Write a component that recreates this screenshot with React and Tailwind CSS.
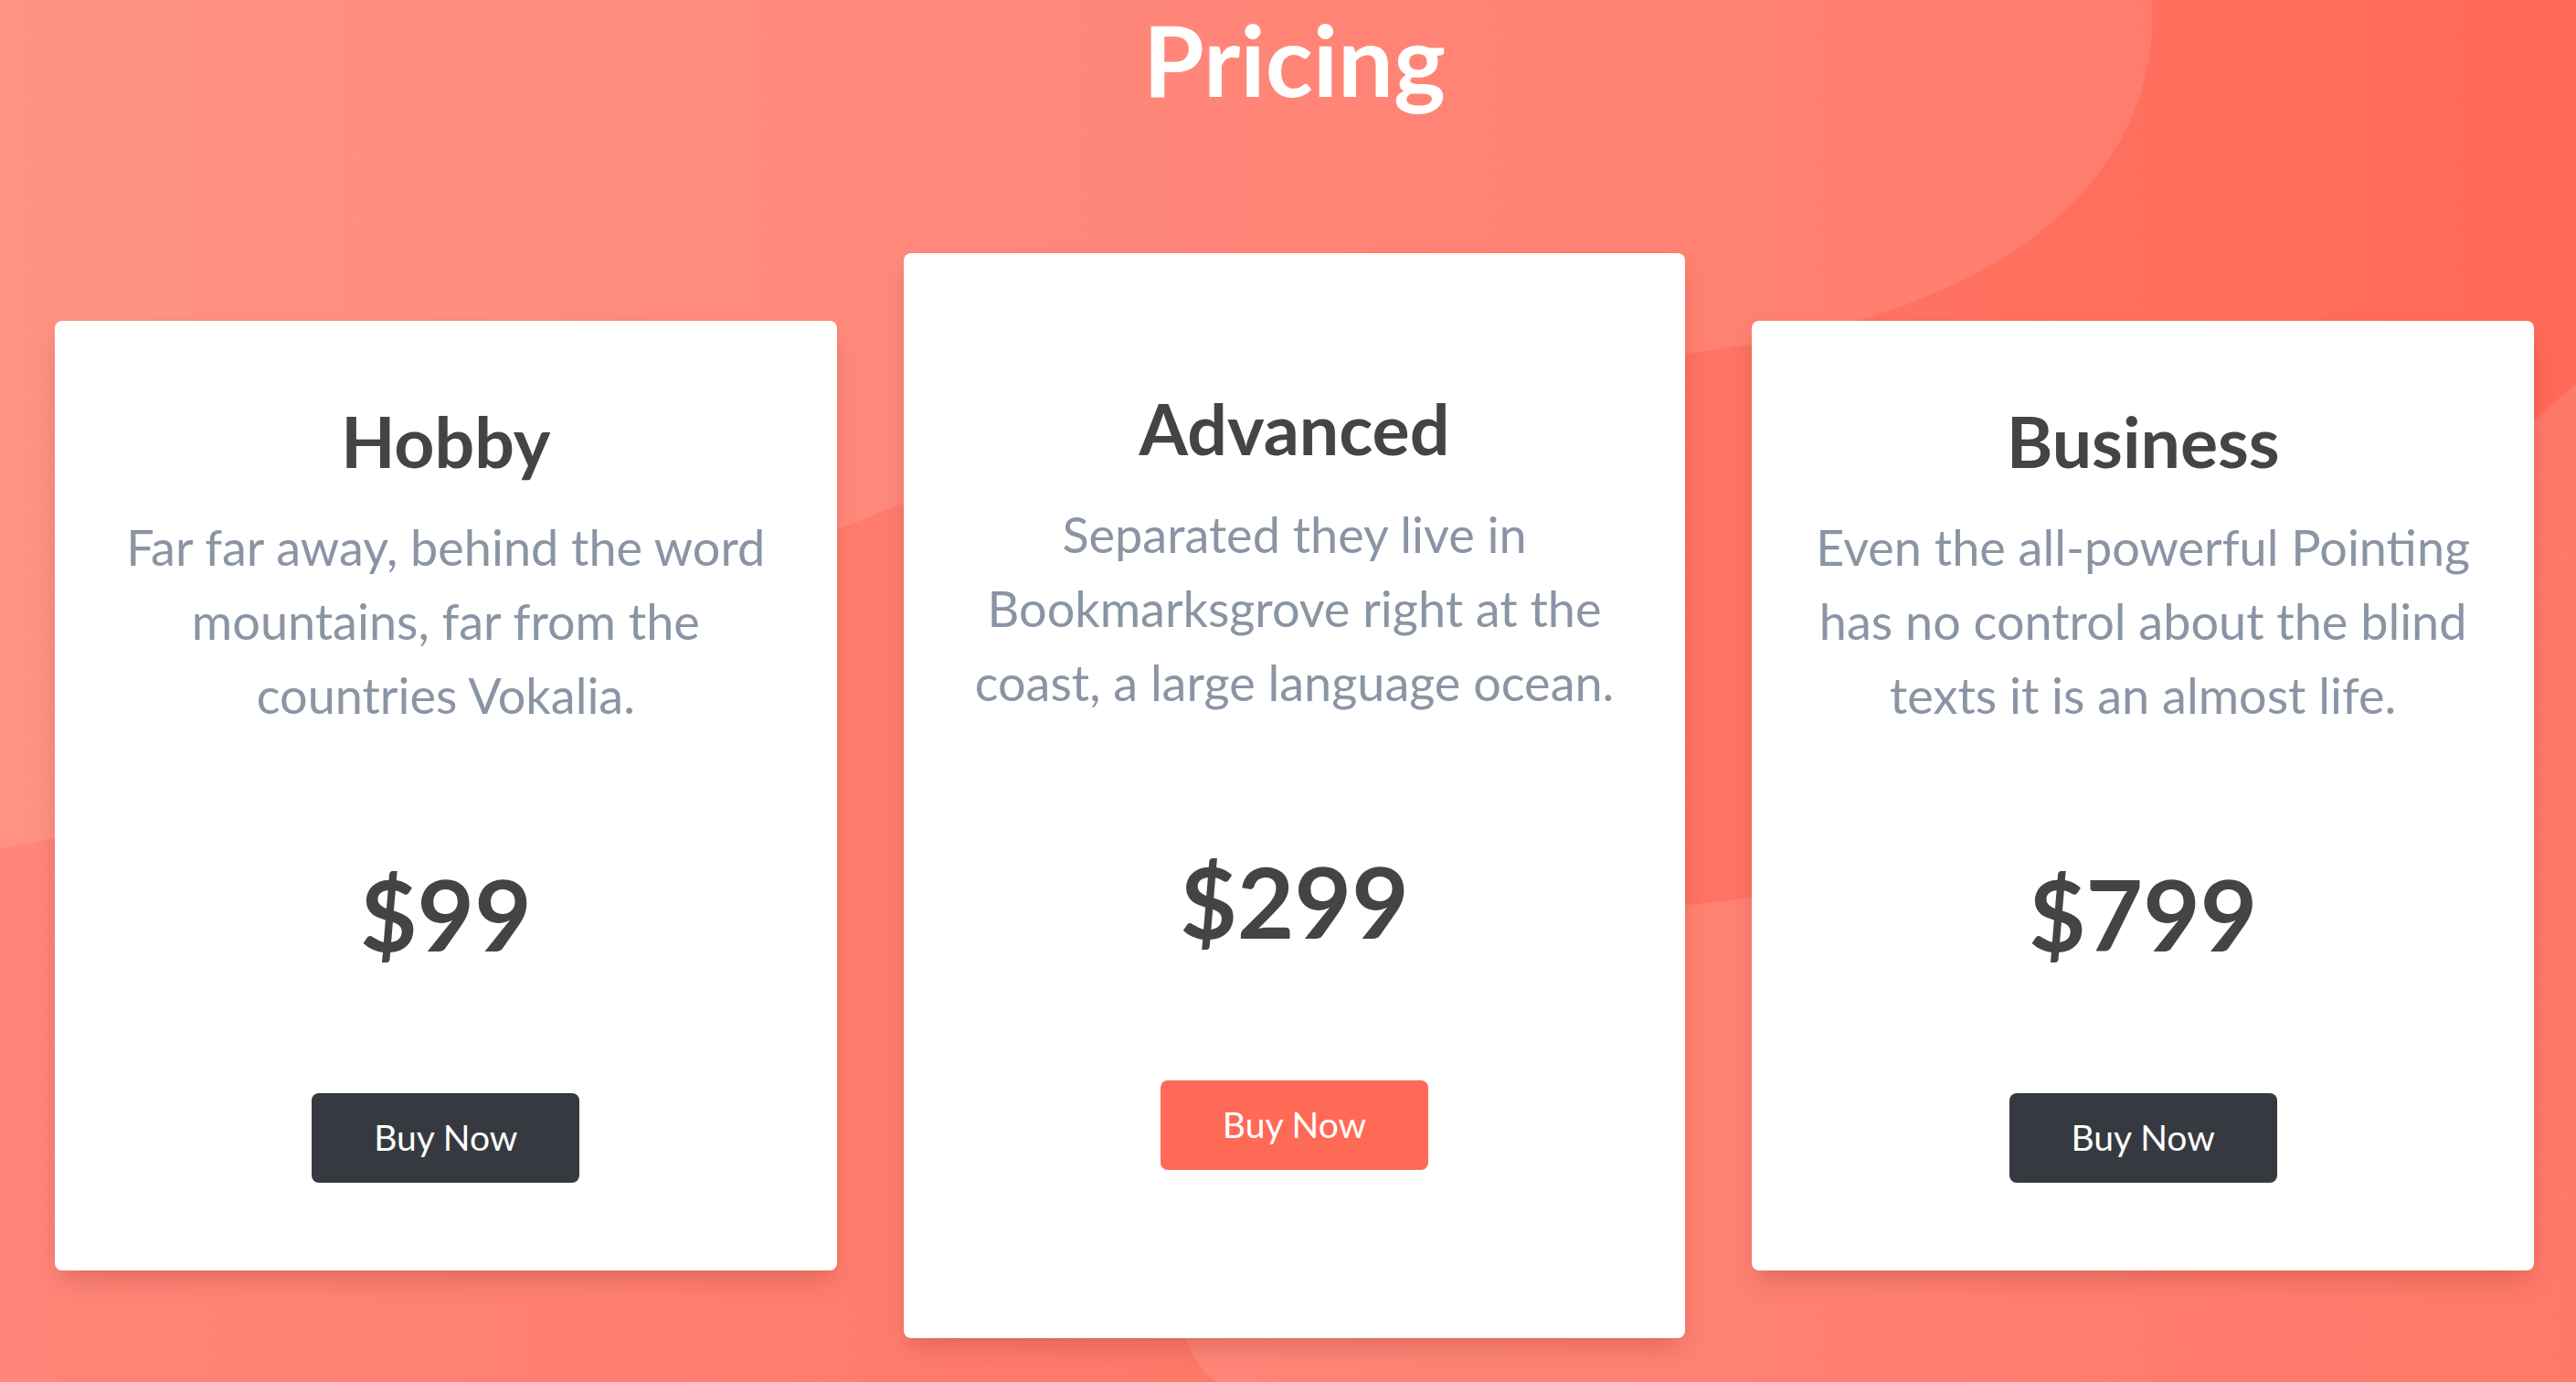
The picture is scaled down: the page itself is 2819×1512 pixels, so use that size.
import React from 'react';

const plans = [
  {
    name: 'Hobby',
    text: 'Far far away, behind the word mountains, far from the countries Vokalia.',
    price: '$99',
    featured: false,
  },
  {
    name: 'Advanced',
    text: 'Separated they live in Bookmarksgrove right at the coast, a large language ocean.',
    price: '$299',
    featured: true,
  },
  {
    name: 'Business',
    text: 'Even the all-powerful Pointing has no control about the blind texts it is an almost life.',
    price: '$799',
    featured: false,
  },
];

const Blobs = () => (
  <svg
    className="absolute inset-0 h-full w-full"
    viewBox="0 0 2819 1512"
    preserveAspectRatio="none"
    aria-hidden="true"
  >
    {/* top wave */}
    <path
      d="M0,0 L2355,0 C2365,170 2230,340 1860,385 C1500,430 1150,480 950,566 C600,700 300,880 0,928 Z"
      fill="#ffffff"
      fillOpacity="0.1"
    />
    {/* lower right wave */}
    <path
      d="M2819,420 C2500,700 2200,960 1850,990 C1500,1020 1280,1250 1290,1430 C1295,1470 1310,1495 1330,1512 L2819,1512 Z"
      fill="#ffffff"
      fillOpacity="0.1"
    />
  </svg>
);

const PlanCard = ({ plan }) => (
  <div
    className={
      plan.featured
        ? 'flex flex-1 flex-col items-center rounded-lg bg-white px-[56px] pt-[145px] pb-[184px] text-center shadow-[0_14px_28px_-6px_rgba(120,30,20,0.25)]'
        : 'flex flex-1 flex-col items-center rounded-lg bg-white px-[56px] pt-[85px] pb-[96px] text-center shadow-[0_14px_28px_-6px_rgba(120,30,20,0.25)]'
    }
  >
    <h2 className="text-[77px] leading-[1.2] font-bold text-[#444444]">{plan.name}</h2>
    <p className="mt-[30px] text-[54px] leading-[1.5] text-[#8a94a4]">{plan.text}</p>
    <div className="mt-[134px] text-[108px] leading-[1.2] font-bold text-[#444444]">{plan.price}</div>
    <button
      className={
        plan.featured
          ? 'mt-[131px] h-[98px] w-[293px] rounded-lg bg-[#ff6a57] text-[39px] text-white'
          : 'mt-[131px] h-[98px] w-[293px] rounded-lg bg-[#363a40] text-[39px] text-white'
      }
    >
      Buy Now
    </button>
  </div>
);

const App = () => {
  return (
    <div className="relative h-screen w-full overflow-hidden bg-[linear-gradient(90deg,#ff8678,#ff6a58)] font-['Lato',sans-serif]">
      <Blobs />
      <div className="relative flex flex-col items-center pr-[46px] pl-[60px]">
        <h1 className="text-[108px] leading-[1.2] font-bold text-white">Pricing</h1>
        <div className="mt-[147px] flex w-full items-center gap-[73px]">
          {plans.map((plan) => (
            <PlanCard key={plan.name} plan={plan} />
          ))}
        </div>
      </div>
    </div>
  );
};

export default App;
